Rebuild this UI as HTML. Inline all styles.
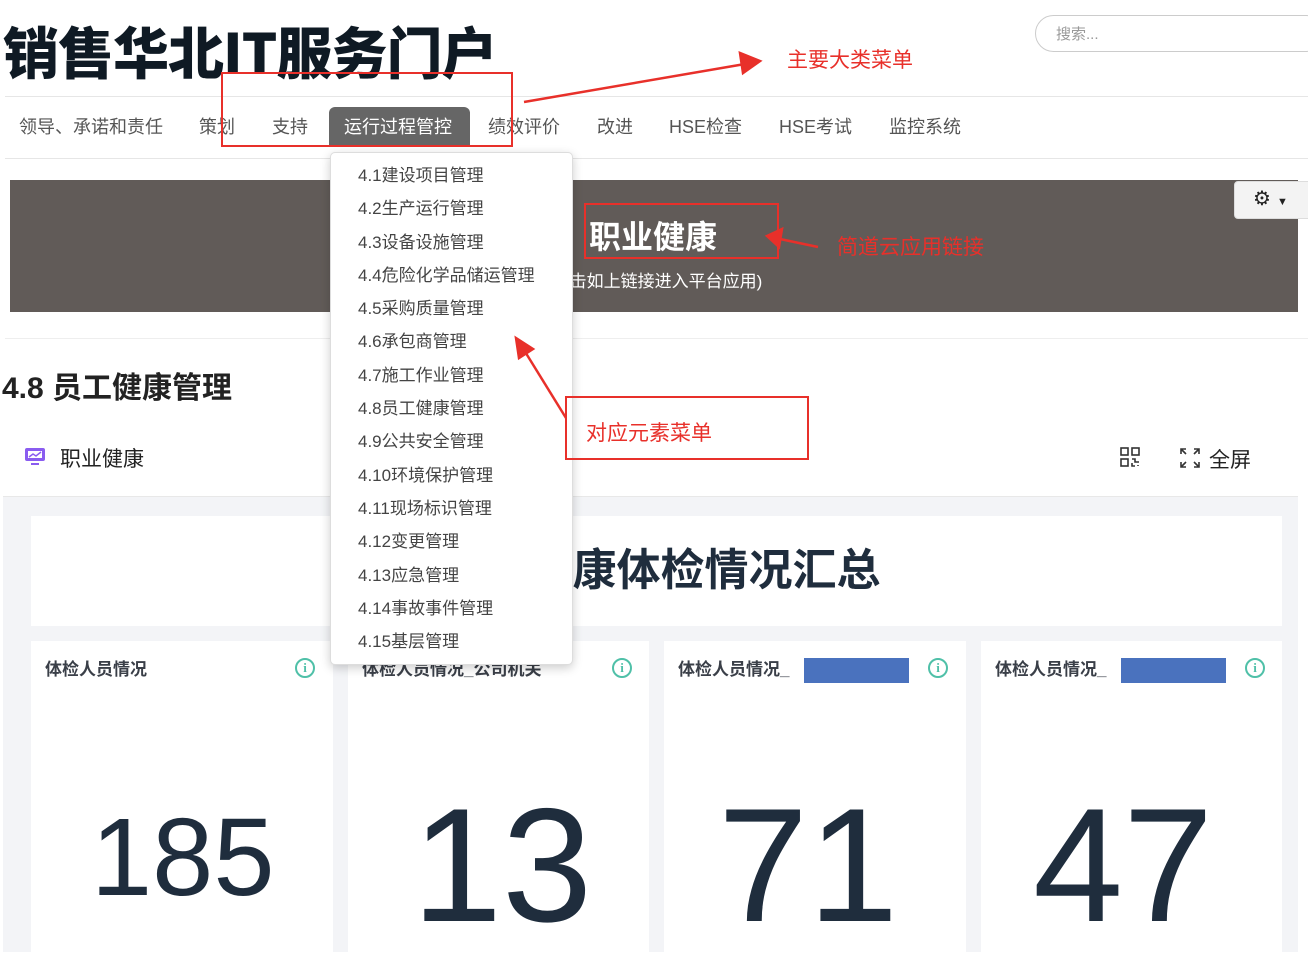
<!DOCTYPE html>
<html><head><meta charset="utf-8"><style>
*{margin:0;padding:0;box-sizing:border-box}
body{width:1308px;height:952px;overflow:hidden;background:#fff;font-family:"Liberation Sans","Noto Sans CJK SC",sans-serif;position:relative}
.a{position:absolute;white-space:nowrap}
.nav{top:113px;font-size:18px;color:#555}
.card{position:absolute;background:#fff;top:641px;height:320px}
.ct{position:absolute;left:14px;top:14px;font-size:17px;font-weight:bold;color:#3a3f48}
.info{position:absolute;top:17px;width:20px;height:20px;border:2px solid #4fc0a8;border-radius:50%;color:#4fc0a8;font-size:13px;font-weight:bold;text-align:center;line-height:16px;font-family:"Liberation Serif",serif}
.num{position:absolute;color:#1f2d3d;font-family:"Liberation Sans",sans-serif;line-height:1}
.dd div{height:33.3px;line-height:33.3px;font-size:17px;color:#444;padding-left:27px}
.red{position:absolute;border:2px solid #e8302a}
.rt{position:absolute;color:#e8302a;font-size:21px;white-space:nowrap}
</style></head><body>
<div class="a" style="left:3px;top:10px;font-size:56px;font-weight:900;color:#0f1a24;letter-spacing:-1px;font-family:'Noto Sans CJK SC',sans-serif">销售华北IT服务门户</div>
<div class="a" style="left:1035px;top:15px;width:290px;height:37px;border:1px solid #ccc;border-radius:19px;font-size:15px;color:#999;padding:7px 0 0 20px">搜索...</div>
<div class="a" style="left:5px;top:96px;width:1303px;height:1px;background:#e6e6e6"></div>
<div class="a nav" style="left:19px">领导、承诺和责任</div>
<div class="a nav" style="left:199px">策划</div>
<div class="a nav" style="left:272px">支持</div>
<div class="a" style="left:329px;top:107px;width:141px;height:39px;background:#666;border-radius:6px 6px 0 0"></div>
<div class="a nav" style="left:344px;color:#fff">运行过程管控</div>
<div class="a nav" style="left:488px">绩效评价</div>
<div class="a nav" style="left:597px">改进</div>
<div class="a nav" style="left:669px">HSE检查</div>
<div class="a nav" style="left:779px">HSE考试</div>
<div class="a nav" style="left:889px">监控系统</div>
<div class="a" style="left:5px;top:158px;width:1303px;height:1px;background:#e6e6e6"></div>
<div class="a" style="left:10px;top:180px;width:1288px;height:132px;background:#615b58"></div>
<div class="a" style="left:1234px;top:181px;width:80px;height:38px;background:#f3f3f3;border-radius:4px;border:1px solid #ddd;font-size:20px;color:#222;padding:4px 0 0 18px">⚙<span style="font-size:11px;margin-left:6px">▼</span></div>
<div class="a" style="left:589px;top:212px;font-size:32px;font-weight:bold;color:#fff">职业健康</div>
<div class="a" style="left:530px;top:267px;font-size:17px;color:#fff">(请点击如上链接进入平台应用)</div>
<div class="a" style="left:5px;top:338px;width:1303px;height:1px;background:#eee"></div>
<div class="a" style="left:2px;top:363px;font-size:30px;font-weight:bold;color:#222">4.8 员工健康管理</div>
<svg class="a" style="left:24px;top:447px" width="22" height="20" viewBox="0 0 22 20"><rect x="1" y="1" width="20" height="13" rx="2" fill="#8a5cf0"/><rect x="4" y="4" width="14" height="7" fill="#fff"/><path d="M5 10 L9 7 L12 9 L17 5" stroke="#8a5cf0" stroke-width="1.5" fill="none"/><rect x="7" y="16" width="8" height="2" fill="#8a5cf0"/></svg>
<div class="a" style="left:60px;top:443px;font-size:21px;color:#222">职业健康</div>
<svg class="a" style="left:1120px;top:447px" width="20" height="20" viewBox="0 0 20 20" fill="none" stroke="#333" stroke-width="1.6"><rect x="1" y="1" width="7" height="7"/><rect x="12" y="1" width="7" height="7"/><rect x="1" y="12" width="7" height="7"/><path d="M12 12h3v3h4M12 16v3h3M18 18v1"/></svg>
<svg class="a" style="left:1180px;top:448px" width="20" height="20" viewBox="0 0 20 20" fill="none" stroke="#333" stroke-width="1.6"><path d="M1 6V1h5M1 1l5 5M14 1h5v5M19 1l-5 5M1 14v5h5M1 19l5-5M19 14v5h-5M19 19l-5-5"/></svg>
<div class="a" style="left:1209px;top:444px;font-size:21px;color:#222">全屏</div>
<div class="a" style="left:3px;top:496px;width:1295px;height:456px;background:#f3f4f7;border-top:1px solid #e8e8e8"></div>
<div class="a" style="left:31px;top:516px;width:1251px;height:110px;background:#fff"></div>
<div class="a" style="left:35px;top:534px;width:1251px;text-align:center;font-size:44px;font-weight:bold;color:#1f2d3d">员工健康体检情况汇总</div>
<div class="card" style="left:31px;width:302px"><div class="ct">体检人员情况</div><div class="info" style="left:264px">i</div><div class="num" style="left:60px;top:162px;font-size:110px">185</div></div>
<div class="card" style="left:348px;width:301px"><div class="ct">体检人员情况_公司机关</div><div class="info" style="left:264px">i</div><div class="num" style="left:64px;top:144px;font-size:162px">13</div></div>
<div class="card" style="left:664px;width:302px"><div class="ct">体检人员情况_</div><div class="info" style="left:264px">i</div><div style="position:absolute;left:140px;top:17px;width:105px;height:25px;background:#4a72be"></div><div class="num" style="left:54px;top:144px;font-size:162px">71</div></div>
<div class="card" style="left:981px;width:301px"><div class="ct">体检人员情况_</div><div class="info" style="left:264px">i</div><div style="position:absolute;left:140px;top:17px;width:105px;height:25px;background:#4a72be"></div><div class="num" style="left:52px;top:144px;font-size:162px">47</div></div>
<div class="a dd" style="left:330px;top:152px;width:243px;height:513px;background:#fff;border:1px solid #ddd;border-radius:5px;box-shadow:0 3px 10px rgba(0,0,0,.2);padding-top:6px">
<div>4.1建设项目管理</div><div>4.2生产运行管理</div><div>4.3设备设施管理</div><div>4.4危险化学品储运管理</div><div>4.5采购质量管理</div><div>4.6承包商管理</div><div>4.7施工作业管理</div><div>4.8员工健康管理</div><div>4.9公共安全管理</div><div>4.10环境保护管理</div><div>4.11现场标识管理</div><div>4.12变更管理</div><div>4.13应急管理</div><div>4.14事故事件管理</div><div>4.15基层管理</div></div>
<div class="red" style="left:221px;top:72px;width:292px;height:75px"></div>
<div class="red" style="left:584px;top:203px;width:195px;height:56px"></div>
<div class="red" style="left:565px;top:396px;width:244px;height:64px"></div>
<div class="rt" style="left:787px;top:44px">主要大类菜单</div>
<div class="rt" style="left:837px;top:231px">简道云应用链接</div>
<div class="rt" style="left:586px;top:417px">对应元素菜单</div>
<svg class="a" style="left:0;top:0" width="1308" height="952"><g stroke="#e8302a" stroke-width="2.5" fill="#e8302a"><line x1="524" y1="102" x2="745" y2="64"/><polygon points="760,61 740,53 743,73"/><line x1="818" y1="247" x2="780" y2="239"/><polygon points="767,236 782,229 779,247"/><line x1="566" y1="418" x2="524" y2="350"/><polygon points="516,338 519,358 533,349"/></g></svg>
</body></html>
